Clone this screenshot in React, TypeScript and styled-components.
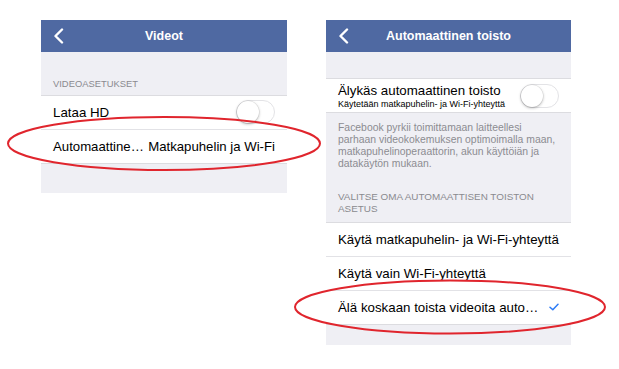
import React from "react";
import styled, { createGlobalStyle } from "styled-components";

const GlobalStyle = createGlobalStyle`
  html, body {
    margin: 0;
    padding: 0;
    background: #ffffff;
  }
  body {
    font-family: "Liberation Sans", Arial, sans-serif;
    color: #000;
  }
`;

interface IPanelProps {
  width: number;
  height: number;
}
interface ISpacerProps {
  h: number;
}
interface ILabelProps {
  size: number;
}

const Page = styled.div`
  position: relative;
  width: 619px;
  height: 369px;
  box-sizing: border-box;
  padding: 20px 0 0 41px;
  display: flex;
  align-items: flex-start;
  gap: 39px;
  overflow: hidden;
`;

const Panel = styled.div<IPanelProps>`
  width: ${(props) => props.width}px;
  height: ${(props) => props.height}px;
  background-color: #efeff4;
  display: flex;
  flex-direction: column;
`;

const Header = styled.div`
  height: 32px;
  background-color: #4f69a2;
  color: #fff;
  display: flex;
  align-items: center;
  justify-content: center;
  position: relative;
  font-size: 12.5px;
  font-weight: 700;
  flex-shrink: 0;
`;

const Back = styled.svg`
  position: absolute;
  left: 12px;
  top: 8px;
`;

const Spacer = styled.div<ISpacerProps>`
  height: ${(props) => props.h}px;
  flex-shrink: 0;
`;

const SectionLabel = styled.div<ILabelProps>`
  padding: 0 12px;
  font-size: ${(props) => props.size}px;
  line-height: 12.5px;
  color: #8a8a8f;
  text-transform: uppercase;
`;

const Group = styled.div`
  background-color: #fff;
  border-top: 1px solid #dcdce0;
  border-bottom: 1px solid #dcdce0;
  flex-shrink: 0;
`;

const Row = styled.div`
  height: 33px;
  padding: 0 12px;
  display: flex;
  align-items: center;
  justify-content: space-between;
  gap: 3px;
  font-size: 13.3px;
  white-space: nowrap;
  & + & {
    border-top: 1px solid #e2e2e6;
  }
`;

const TextStack = styled.div`
  display: flex;
  flex-direction: column;
  gap: 1px;
`;

const Sub = styled.span`
  font-size: 9px;
`;

const Value = styled.span`
  white-space: nowrap;
  font-size: 13.2px;
`;

const Toggle = styled.div`
  width: 37px;
  height: 22px;
  border-radius: 12px;
  border: 1px solid #e3e3e6;
  background: #fff;
  position: relative;
  flex-shrink: 0;
  &::after {
    content: "";
    position: absolute;
    left: 0;
    top: 0;
    width: 22px;
    height: 22px;
    border-radius: 50%;
    background: #fff;
    box-shadow: 0 1px 3px rgba(0, 0, 0, 0.3), 0 0 0 0.5px rgba(0, 0, 0, 0.08);
  }
`;

const Description = styled.div`
  padding: 9px 12px 0;
  font-size: 10.4px;
  line-height: 11.9px;
  color: #8c8c91;
`;

const Overlay = styled.svg`
  position: absolute;
  left: 0;
  top: 0;
  pointer-events: none;
`;

function Chevron() {
  return (
    <Back width="12" height="16" viewBox="0 0 12 16">
      <path
        d="M9 1.5 L2.5 8 L9 14.5"
        fill="none"
        stroke="#fff"
        strokeWidth="2.4"
        strokeLinecap="round"
        strokeLinejoin="round"
      />
    </Back>
  );
}

function Check() {
  return (
    <svg width="10" height="8" viewBox="0 0 10 8">
      <path
        d="M1 4.2 L3.8 6.8 L9 1.2"
        fill="none"
        stroke="#2e7cf6"
        strokeWidth="1.5"
        strokeLinecap="round"
        strokeLinejoin="round"
      />
    </svg>
  );
}

function App() {
  return (
    <>
      <GlobalStyle />
      <Page>
        <Panel width={246} height={173}>
          <Header>
            <Chevron />
            Videot
          </Header>
          <Spacer h={26} />
          <SectionLabel size={9.4}>Videoasetukset</SectionLabel>
          <Spacer h={4} />
          <Group>
            <Row>
              <span>Lataa HD</span>
              <Toggle />
            </Row>
            <Row>
              <Value>Automaattine…</Value>
              <Value>Matkapuhelin ja Wi-Fi</Value>
            </Row>
          </Group>
        </Panel>

        <Panel width={245} height={325}>
          <Header>
            <Chevron />
            Automaattinen toisto
          </Header>
          <Spacer h={26} />
          <Group>
            <Row>
              <TextStack>
                <span>Älykäs automaattinen toisto</span>
                <Sub>Käytetään matkapuhelin- ja Wi-Fi-yhteyttä</Sub>
              </TextStack>
              <Toggle />
            </Row>
          </Group>
          <Description>
            Facebook pyrkii toimittamaan laitteellesi parhaan videokokemuksen
            optimoimalla maan, matkapuhelinoperaattorin, akun käyttöiän ja
            datakäytön mukaan.
          </Description>
          <Spacer h={21} />
          <SectionLabel size={9.9}>
            Valitse oma automaattisen toiston asetus
          </SectionLabel>
          <Spacer h={6} />
          <Group>
            <Row>
              <span>Käytä matkapuhelin- ja Wi-Fi-yhteyttä</span>
            </Row>
            <Row>
              <span>Käytä vain Wi-Fi-yhteyttä</span>
            </Row>
            <Row>
              <span>Älä koskaan toista videoita auto…</span>
              <Check />
            </Row>
          </Group>
        </Panel>

        <Overlay width="619" height="369" viewBox="0 0 619 369">
          <ellipse
            cx="164"
            cy="143.5"
            rx="156"
            ry="26.5"
            fill="none"
            stroke="#e0252d"
            strokeWidth="2"
          />
          <ellipse
            cx="450"
            cy="307"
            rx="155"
            ry="26.5"
            fill="none"
            stroke="#e0252d"
            strokeWidth="2"
          />
        </Overlay>
      </Page>
    </>
  );
}

export default App;
